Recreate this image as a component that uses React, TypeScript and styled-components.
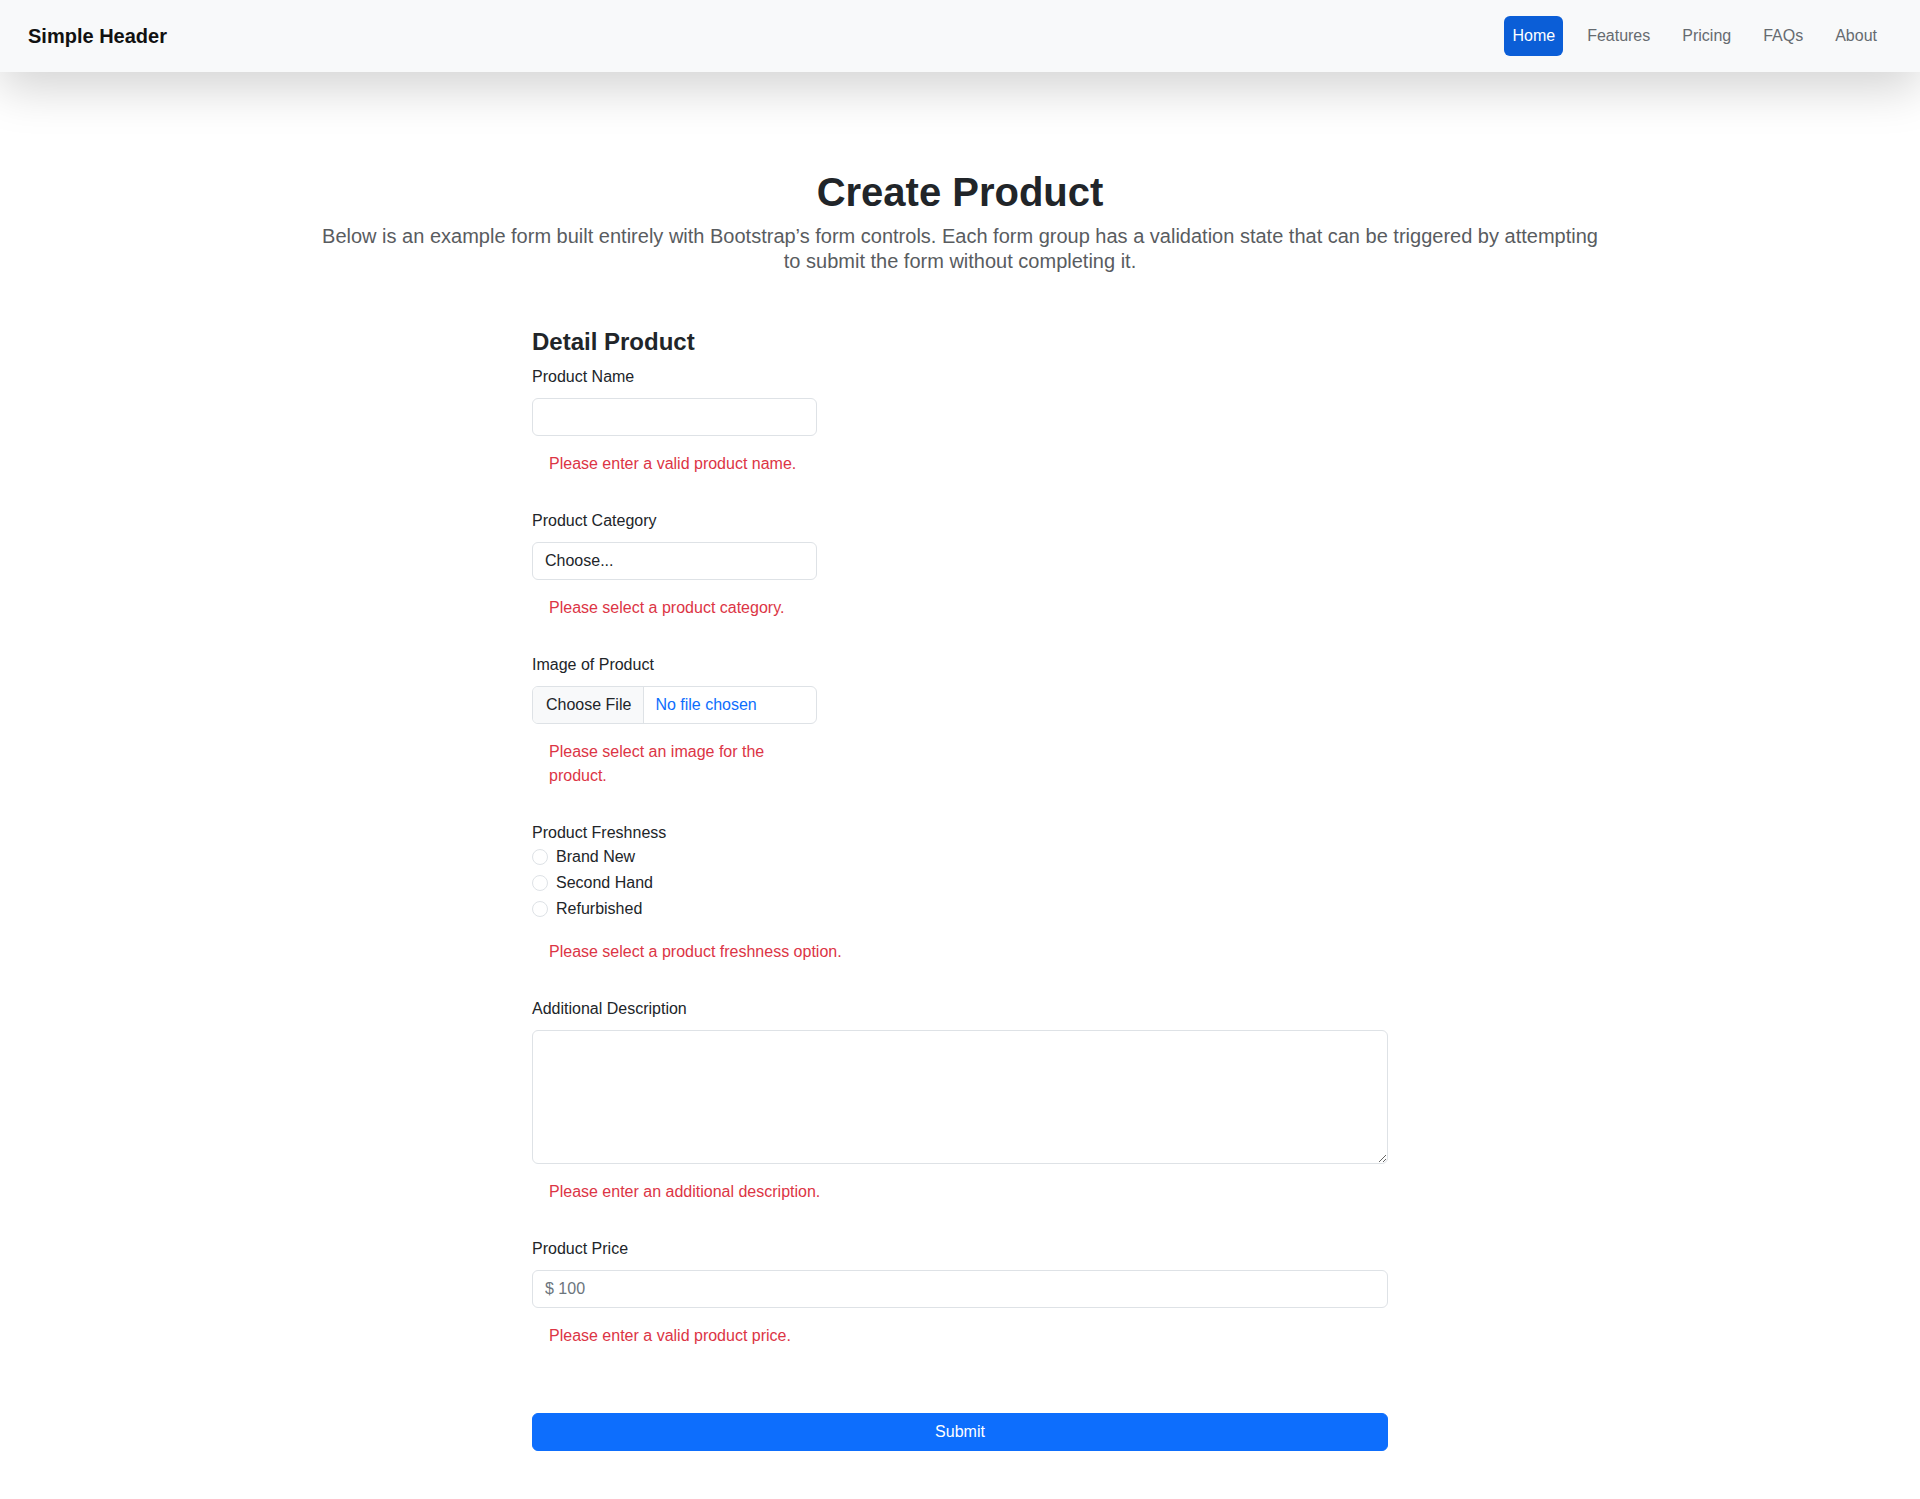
import React from "react";
import styled, { createGlobalStyle } from "styled-components";

const GlobalStyle = createGlobalStyle`
  html, body {
    margin: 0;
    padding: 0;
    background: #fff;
  }
  body {
    font-family: "Liberation Sans", Arial, Helvetica, sans-serif;
    font-size: 16px;
    line-height: 24px;
    color: #212529;
  }
  *, *::before, *::after { box-sizing: border-box; }
`;

const Header = styled.header`
  position: relative;
  z-index: 1;
  height: 72px;
  display: flex;
  align-items: center;
  justify-content: space-between;
  padding: 0 35px 0 28px;
  background: #f8f9fa;
  box-shadow: 0 16px 48px rgba(0, 0, 0, 0.175);
`;

const Brand = styled.a`
  font-size: 20px;
  font-weight: 700;
  color: #111;
  text-decoration: none;
  line-height: 30px;
`;

const Nav = styled.nav`
  display: flex;
  align-items: center;
  gap: 16px;
`;

const NavLink = styled.a<{ $active?: boolean }>`
  display: block;
  padding: 8px 8px;
  font-size: 16px;
  line-height: 24px;
  border-radius: 6px;
  text-decoration: none;
  color: ${(p) => (p.$active ? "#fff" : "#666b70")};
  background: ${(p) => (p.$active ? "#0b5ed7" : "transparent")};
`;

const Main = styled.main`
  padding: 96px 0 48px;
`;

const Intro = styled.section`
  max-width: 1296px;
  margin: 0 auto;
  text-align: center;
`;

const Title = styled.h1`
  margin: 0 0 8px;
  font-size: 40px;
  line-height: 48px;
  font-weight: 700;
  color: #212529;
`;

const Lead = styled.p`
  margin: 0;
  font-size: 20px;
  line-height: 25px;
  color: #595c5f;
`;

const Form = styled.form`
  width: 856px;
  margin: 53px auto 0;
`;

const SectionTitle = styled.h4`
  margin: 0 0 9px;
  font-size: 24px;
  line-height: 29px;
  font-weight: 700;
  color: #212529;
`;

const Group = styled.div<{ $narrow?: boolean }>`
  width: ${(p) => (p.$narrow ? "33.333%" : "100%")};
  margin-bottom: 33px;
`;

const Label = styled.label<{ $tight?: boolean }>`
  display: block;
  margin-bottom: ${(p) => (p.$tight ? "0" : "9px")};
  font-size: 16px;
  line-height: 24px;
  color: #212529;
`;

const TextInput = styled.input`
  display: block;
  width: 100%;
  height: 38px;
  padding: 6px 12px;
  font-family: inherit;
  font-size: 16px;
  line-height: 24px;
  color: #212529;
  background: #fff;
  border: 1px solid #dee2e6;
  border-radius: 6px;
  outline: none;
  &::placeholder {
    color: #6c757d;
  }
`;

const Select = styled.select`
  display: block;
  width: 100%;
  height: 38px;
  padding: 6px 12px;
  font-family: inherit;
  font-size: 16px;
  line-height: 24px;
  color: #212529;
  background: #fff;
  border: 1px solid #dee2e6;
  border-radius: 6px;
  appearance: none;
  -webkit-appearance: none;
  outline: none;
`;

const FileControl = styled.div`
  display: flex;
  width: 100%;
  height: 38px;
  border: 1px solid #dee2e6;
  border-radius: 6px;
  overflow: hidden;
  background: #fff;
`;

const FileButton = styled.span`
  display: flex;
  align-items: center;
  padding: 0 12px 0 13px;
  background: #f8f9fa;
  border-right: 1px solid #dee2e6;
  color: #212529;
  font-size: 16px;
  white-space: nowrap;
`;

const FileName = styled.span`
  display: flex;
  align-items: center;
  padding: 0 12px 0 11px;
  color: #0d6efd;
  font-size: 16px;
  white-space: nowrap;
`;

const TextArea = styled.textarea`
  display: block;
  width: 100%;
  height: 134px;
  padding: 6px 12px;
  font-family: inherit;
  font-size: 16px;
  line-height: 24px;
  color: #212529;
  background: #fff;
  border: 1px solid #dee2e6;
  border-radius: 6px;
  outline: none;
  resize: vertical;
`;

const RadioList = styled.div`
  padding-bottom: 1px;
`;

const Check = styled.label`
  display: flex;
  align-items: flex-start;
  gap: 8px;
  margin-bottom: 2px;
  font-size: 16px;
  line-height: 24px;
  color: #212529;
`;

const Radio = styled.input`
  appearance: none;
  -webkit-appearance: none;
  flex: none;
  width: 16px;
  height: 16px;
  margin: 4px 0 0;
  border: 1px solid #dee2e6;
  border-radius: 50%;
  background: #fff;
`;

const Feedback = styled.div`
  margin-top: 16px;
  padding: 0 10px 0 17px;
  font-size: 16px;
  line-height: 24px;
  color: #dc3545;
`;

const SubmitButton = styled.button`
  display: block;
  width: 100%;
  height: 38px;
  margin-top: 65px;
  border: 1px solid #0d6efd;
  border-radius: 6px;
  background: #0d6efd;
  color: #fff;
  font-family: inherit;
  font-size: 16px;
  line-height: 24px;
  cursor: pointer;
`;

const navItems = ["Home", "Features", "Pricing", "FAQs", "About"];

export default function App() {
  return (
    <>
      <GlobalStyle />
      <Header>
        <Brand href="#">Simple Header</Brand>
        <Nav>
          {navItems.map((item, i) => (
            <NavLink key={item} href="#" $active={i === 0}>
              {item}
            </NavLink>
          ))}
        </Nav>
      </Header>
      <Main>
        <Intro>
          <Title>Create Product</Title>
          <Lead>
            Below is an example form built entirely with Bootstrap’s form controls. Each form group has a
            validation state that can be triggered by attempting to submit the form without completing it.
          </Lead>
        </Intro>
        <Form onSubmit={(e) => e.preventDefault()}>
          <SectionTitle>Detail Product</SectionTitle>

          <Group $narrow>
            <Label htmlFor="productName">Product Name</Label>
            <TextInput id="productName" type="text" />
            <Feedback>Please enter a valid product name.</Feedback>
          </Group>

          <Group $narrow>
            <Label htmlFor="productCategory">Product Category</Label>
            <Select id="productCategory" defaultValue="">
              <option value="">Choose...</option>
              <option>Electronics</option>
              <option>Fashion</option>
            </Select>
            <Feedback>Please select a product category.</Feedback>
          </Group>

          <Group $narrow>
            <Label>Image of Product</Label>
            <FileControl>
              <FileButton>Choose File</FileButton>
              <FileName>No file chosen</FileName>
            </FileControl>
            <Feedback>Please select an image for the product.</Feedback>
          </Group>

          <Group>
            <Label $tight>Product Freshness</Label>
            <RadioList>
              {["Brand New", "Second Hand", "Refurbished"].map((opt) => (
                <Check key={opt}>
                  <Radio type="radio" name="freshness" />
                  {opt}
                </Check>
              ))}
            </RadioList>
            <Feedback>Please select a product freshness option.</Feedback>
          </Group>

          <Group>
            <Label htmlFor="desc">Additional Description</Label>
            <TextArea id="desc" />
            <Feedback>Please enter an additional description.</Feedback>
          </Group>

          <Group>
            <Label htmlFor="price">Product Price</Label>
            <TextInput id="price" type="text" placeholder="$ 100" />
            <Feedback>Please enter a valid product price.</Feedback>
          </Group>

          <SubmitButton type="submit">Submit</SubmitButton>
        </Form>
      </Main>
    </>
  );
}
